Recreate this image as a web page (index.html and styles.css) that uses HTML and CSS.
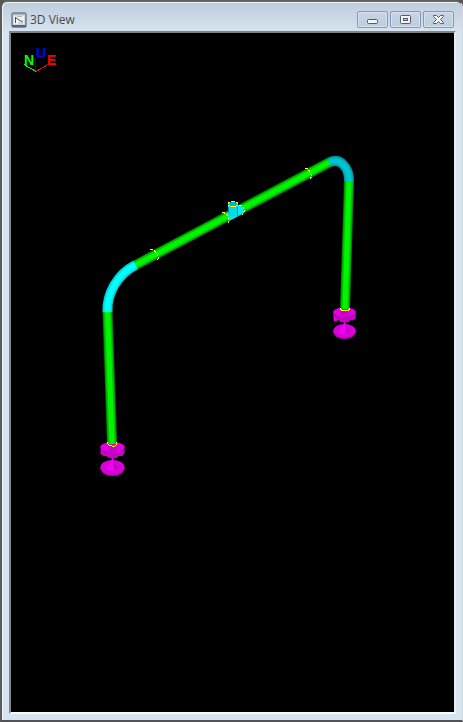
FILE: index.html
```html
<!DOCTYPE html>
<html lang="en">
<head>
<meta charset="utf-8">
<title>3D View</title>
<link rel="stylesheet" href="styles.css">
</head>
<body>
<main class="window">
  <header class="titlebar">
    <svg class="app-icon" width="16" height="16" viewBox="0 0 16 16" aria-hidden="true">
      <rect x="1" y="1" width="14" height="14" rx="2" fill="#a9b7c6" stroke="#8393a7" stroke-width="2"/>
      <path d="M1 13h14v1q0 1-1 1H2q-1 0-1-1z" fill="#52677f"/>
      <rect x="2.500" y="3.500" width="11" height="9" fill="#f4f4f1" stroke="#d7d8d8"/>
      <path d="M4.500 11V5M4 5l4 3 4 2" fill="none" stroke="#48515b"/>
      <path d="M7 11h5M6 4.500h5" stroke="#b5babd"/>
    </svg>
    <h1 class="title">3D View</h1>
    <div class="controls">
      <button class="control" type="button" aria-label="Minimize">
        <svg width="13" height="11" viewBox="0 0 13 11"><rect x="1.500" y="5.500" width="10" height="4" rx="1" fill="#f4f4f4" stroke="#535b6b"/></svg>
      </button>
      <button class="control" type="button" aria-label="Maximize">
        <svg width="13" height="11" viewBox="0 0 13 11"><rect x="1.500" y="1.500" width="10" height="8" rx="1" fill="#f4f4f4" stroke="#535b6b"/><rect x="4.500" y="4.500" width="4" height="2" fill="#b9c8da" stroke="#535b6b"/></svg>
      </button>
      <button class="control" type="button" aria-label="Close">
        <svg width="13" height="11" viewBox="0 0 13 11"><path d="M1.500 1.500h3l2 2 2-2h3v1L8.500 5.500l3 3v1h-3l-2-2-2 2h-3v-1l3-3-3-3z" fill="#f4f4f4" stroke="#535b6b" stroke-linejoin="round"/></svg>
      </button>
    </div>
  </header>
  <section class="viewport" aria-label="Pipe model">
    <svg class="scene" viewBox="11 33 443 679" preserveAspectRatio="xMinYMin meet">
      <defs>
        <path id="left-leg" d="M112 444L107.500 311"/>
        <path id="left-bend" d="M107.500 312C106.500 293 118 274 135.500 265"/>
        <path id="run" d="M135 265.300L330 162"/>
        <path id="right-bend" d="M329.500 162.300C340 157.500 349.500 167 349 182"/>
        <path id="right-leg" d="M349 182L345 309"/>
        <g id="support">
          <path d="M-12-1v8l3 2h3l2 2h8l2-2h4l2-3v-7z" fill="#c800c8"/>
          <ellipse cy="0" rx="12" ry="5" fill="#e000e0"/>
          <path d="M-11 2q4 5 11 5t11-5" fill="none" stroke="#b000b0"/>
          <path d="M-4-1h8v6h-8z" fill="#c800c8"/>
          <path d="M-12 20v2q2 7 12 7t12-7v-2z" fill="#c000c0"/>
          <ellipse cy="20" rx="12" ry="7" fill="#d900d9"/>
          <path d="M-1 11h2v3l3 4 2 4q-6 3-12 0l2-4 3-4z" fill="#f500f5"/>
          <path d="M1 14l3 4 2 4q-3 1-5 1z" fill="#c000c0"/>
        </g>
      </defs>
      <g class="axes" fill="none" shape-rendering="crispEdges">
        <path d="M35.500 71V58" stroke="#00f"/>
        <path d="M36 71.500l-12-7" stroke="#0f0"/>
        <path d="M36 71.500l12-7" stroke="#f00"/>
      </g>
      <text class="axis north" x="24" y="65">N</text>
      <text class="axis up" x="36" y="58">U</text>
      <text class="axis east" x="47" y="65">E</text>

      <use href="#support" x="112.500" y="447"/>
      <use href="#support" transform="translate(344.500 312) scale(.93)"/>
      <path d="M334.500 318v3h3" fill="none" stroke="#f0f"/>

      <g class="pipe">
        <g class="shade"><use href="#left-leg"/><use href="#run"/><use href="#right-leg"/></g>
        <g class="body"><use href="#left-leg"/><use href="#run"/><use href="#right-leg"/></g>
        <g class="light"><use href="#left-leg"/><use href="#run"/><use href="#right-leg"/></g>
      </g>
      <g class="pipe bend">
        <use class="shade" href="#left-bend"/><use class="body" href="#left-bend"/><use class="light" href="#left-bend"/>
      </g>
      <g class="pipe bend far">
        <use class="shade" href="#right-bend"/><use class="body" href="#right-bend"/><use class="light" href="#right-bend"/>
      </g>
      <g>
        <path d="M226 213l13-8q5 2 5 8l-15 8q1-4-3-8z" fill="#00ebf5"/>
        <path d="M228 204v11l5 2 5-2v-11z" fill="#00dce6"/>
        <path d="M228.500 207v6M237.500 207v9" stroke="#008d96"/>
        <ellipse cx="233" cy="204" rx="5" ry="2" fill="#00b7c2"/>
      </g>
      <g class="welds">
        <path class="seam" d="M228 205.500q5 2 10 0"/>
        <path d="M228 203.500q1-2 5-2t5 2"/>
        <path d="M222 212.500q4 0 6 4t0 6"/>
        <path d="M239 205q4 0 5 4t-2 6"/>
        <path d="M150 249q4 0 6 4 4 4 1 8"/>
        <path d="M305 168q3 0 5 4 3 4 0 7"/>
        <path class="seam" d="M107 442q0 3 5 4t5-4"/>
        <path class="seam" d="M340 308q1 3 5 3t5-3"/>
      </g>
    </svg>
  </section>
</main>
</body>
</html>
```

FILE: styles.css
```css
* {
  box-sizing: border-box;
}

body {
  margin: 0;
  background: #555556;
  font-family: "Open Sans", "Noto Sans", sans-serif;
}

.window {
  display: flex;
  flex-direction: column;
  height: 100vh;
  padding: 0 6px 6px;
  border: solid;
  border-width: 2px 1px 2px 2px;
  border-color: #646461 #d1d8df #515254 #5a5b5c;
  border-radius: 7px 7px 0 0;
  background: linear-gradient(#becddc, #d7e4f1 31px);
  box-shadow: inset 1px 1px #f1f4f6;
}

.titlebar {
  display: flex;
  align-items: center;
  flex: 0 0 29px;
  padding: 6px 2px 0 3px;
}

.title {
  margin: 0 auto 0 3px;
  color: #474c52;
  font-size: 12px;
  font-weight: 400;
  line-height: 16px;
}

.controls {
  display: flex;
  gap: 2px;
}

.control {
  display: flex;
  align-items: center;
  justify-content: center;
  width: 31px;
  height: 17px;
  padding: 0;
  border: 1px solid #8799b2;
  border-radius: 2px;
  background: linear-gradient(#c7d5e4, #bccddf);
  box-shadow: inset 0 0 0 1px #d6e1ed;
}

.viewport {
  flex: 1;
  min-height: 0;
  border: 2px solid;
  border-color: #828385 #eeeceb #fbfaf8 #828385;
  background: #000;
  overflow: hidden;
  margin-left: 1px;
}

.scene {
  display: block;
  width: 100%;
}

.axis {
  font: bold 14px "Liberation Sans", sans-serif;
}

.north { fill: #0f0; }
.up { fill: #00f; }
.east { fill: #f00; }

.pipe {
  fill: none;
  stroke: #008000;
}

.shade { stroke-width: 10px; }
.body { stroke: #00c000; stroke-width: 8px; }
.light { stroke: #00f500; stroke-width: 5px; }

.bend { stroke: #00c3c8; }
.bend .body { stroke: #00e6ea; }
.bend .light { stroke: #00ffff; }

.far { stroke: #008a94; }
.far .body { stroke: #00adb8; }
.far .light { stroke: #00c5d0; }

.welds {
  fill: none;
  stroke: #ff0;
  stroke-dasharray: 3 1;
  shape-rendering: crispEdges;
}

.seam {
  stroke-dasharray: none;
}
```
